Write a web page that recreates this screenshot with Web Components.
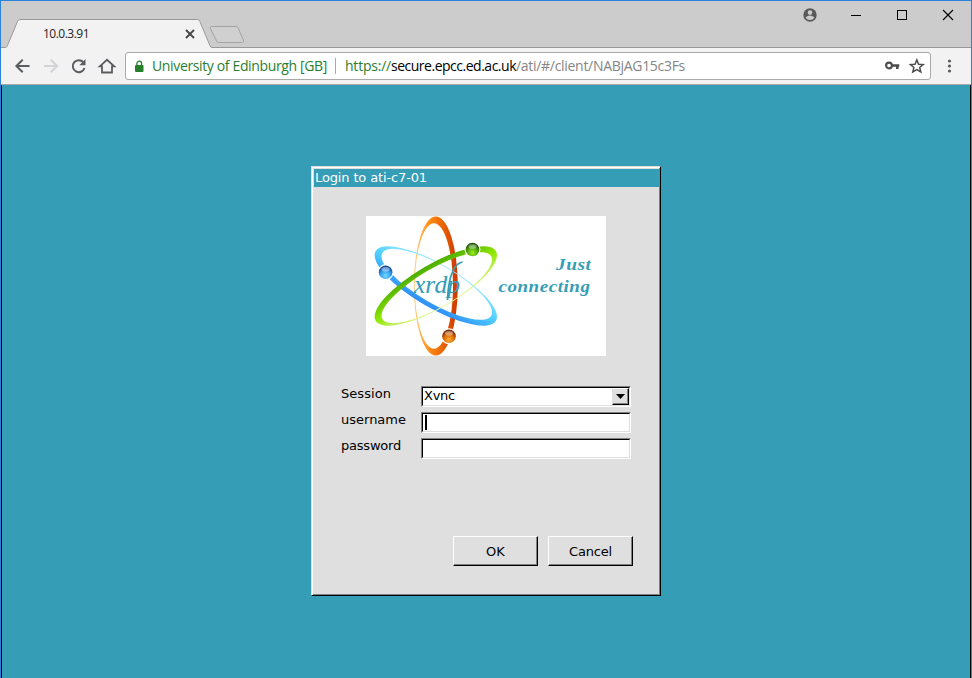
<!DOCTYPE html>
<html lang="en"><head><meta charset="utf-8"><title>10.0.3.91</title>
<style>html,body{margin:0;height:100%;overflow:hidden}</style></head><body>
<browser-window>
  <tab-strip slot="tabs"></tab-strip>
  <tool-bar slot="tools"></tool-bar>
  <login-dialog></login-dialog>
</browser-window>
<script>
const define = (name, html, setup) => customElements.define(name, class extends HTMLElement {
  constructor() { super(); this.attachShadow({mode: 'open'}).innerHTML = html; }
  connectedCallback() { if (setup) setup(this); }
});

/* Text run whose tracking is adjusted to fill the width given in "w". */
define('fit-text', `<style>:host{display:block;white-space:pre;flex:none}span{display:inline-block}</style><span><slot></slot></span>`, el => {
  const s = el.shadowRoot.querySelector('span'), w = +el.getAttribute('w');
  el.style.width = w + 'px';
  s.style.letterSpacing = (w - s.getBoundingClientRect().width) / el.textContent.length + 'px';
});

define('tab-strip', `<style>
:host{display:flex;height:46px;background:#ccc;border-bottom:1px solid #999;position:relative}
.tab{width:206px;margin-left:3px;position:relative;flex:none}
.tab svg{position:absolute;left:0;top:0;z-index:0}
.in{position:relative;display:flex;align-items:center;height:20px;padding:23px 0 0 39px;font:12px/20px "Open Sans","Noto Sans",sans-serif;color:#222}
.in .x{position:static;margin-left:96px}
.new{margin:23px 0 0 -2px;flex:none;position:relative}
.ctl{margin-left:auto;display:flex;padding:6px 16px 0 0;align-items:flex-start;flex:none}
</style>
<div class="tab"><svg width="210" height="48"><path d="M0 46.5H1.5Q2.7 46.3 3.3 44.8L13.6 20.3Q14.5 18.5 16 18.5H193.5Q195 18.5 195.8 20.3L206 44.8Q206.6 46.5 208 46.5V48H0Z" fill="#f2f2f2"/><path d="M0 46.5H1.5Q2.7 46.3 3.3 44.8L13.6 20.3Q14.5 18.5 16 18.5H193.5Q195 18.5 195.8 20.3L206 44.8Q206.6 46.5 208 46.5" fill="none" stroke="#999"/></svg>
<div class="in"><fit-text w="46">10.0.3.91</fit-text><svg class="x" width="10" height="10"><path d="M1 1l8 8M9 1L1 9" stroke="#444" stroke-width="1.8"/></svg></div></div>
<svg class="new" width="38" height="20"><path d="M3.5 2.5H28Q29.5 2.5 30.2 4L35.3 16Q36 18.5 34.5 18.5H11Q9.3 18.5 8.6 17L2.5 4.5Q2 2.5 3.5 2.5Z" fill="#d0d0d0" stroke="#a3a3a3"/></svg>
<div class="ctl"><svg width="152" height="18">
<circle cx="7" cy="8" r="6.7" fill="#5a5a5a"/><circle cx="7" cy="5.6" r="2.3" fill="#ccc"/><path d="M2.5 10.5Q4.8 8.5 7 8.5T11.5 10.5Q9.8 13 7 13T2.5 10.5Z" fill="#ccc"/>
<path d="M48 8.5H58" stroke="#000"/><rect x="94.5" y="3.5" width="9" height="9" fill="none" stroke="#000"/><path d="M140 3l10 10M150 3l-10 10" stroke="#000" stroke-width="1.1"/></svg></div>`);

define('tool-bar', `<style>
:host{display:flex;align-items:center;box-sizing:border-box;height:37px;background:#f2f2f2;border-bottom:1px solid #a9a9a9;padding:0 0 0 13px;font:14px/20px "Open Sans","Noto Sans",sans-serif}
svg{flex:none;display:block}
.box{display:flex;align-items:center;box-sizing:border-box;width:806px;height:28px;border:1px solid #a9a9a9;border-radius:3px;background:#fff;margin-left:9px;padding-left:8px;flex:none}
.org{color:#2a7e30;margin-left:8px}.sep{width:1px;height:16px;background:#aaa;margin:0 9px 0 8px}
.g{color:#2a7e30}.p{color:#858585}.b{color:#000}
.icons{margin-left:auto;margin-right:2px}
</style>
<svg width="102" height="20" fill="none" stroke="#5a5c60" stroke-width="2">
<path d="M15.5 10H2.5M8.7 3.7L2.4 10l6.3 6.3"/>
<path d="M30 10H43M36.8 3.7L43.1 10l-6.3 6.3" stroke="#d2d3d5"/>
<path d="M69.3 6.2A6 6 0 1 0 70.5 12"/><path d="M71.5 3V9.2H65.3Z" fill="#5a5c60" stroke="none"/>
<path d="M85.8 10.3L93 3.8l7.2 6.5H98V16.5H88V10.3Z" stroke-width="1.8"/></svg>
<div class="box"><svg width="10" height="13"><rect x="1" y="5" width="8.5" height="7" rx="1" fill="#25802c"/><path d="M2.9 6V3.5a2.3 2.3 0 0 1 4.7 0V6" fill="none" stroke="#25802c" stroke-width="1.3"/></svg>
<fit-text class="org" w="175">University of Edinburgh [GB]</fit-text><div class="sep"></div>
<fit-text class="g" w="46">https://</fit-text><fit-text class="b" w="125">secure.epcc.ed.ac.uk</fit-text><fit-text class="p" w="169">/ati/#/client/NABjAG15c3Fs</fit-text>
<svg class="icons" width="44" height="18"><circle cx="5" cy="8.5" r="2.9" fill="none" stroke="#4d4d4d" stroke-width="2.1"/><path d="M8 7.3H15.3V9.8H14.6V12H12V9.8H8Z" fill="#4d4d4d"/>
<path transform="translate(6.6 0)" d="M26.2 2.9L28 7.2 32.6 7.6 29.1 10.5 30.2 15 26.2 12.6 22.2 15 23.3 10.5 19.8 7.6 24.4 7.2Z" fill="none" stroke="#4d4d4d" stroke-width="1.5"/></svg></div>
<svg style="margin-left:15px" width="8" height="16" fill="#5a5c60"><circle cx="3.5" cy="3" r="1.6"/><circle cx="3.5" cy="8" r="1.6"/><circle cx="3.5" cy="13" r="1.6"/></svg>`);

define('xrdp-logo', `<style>:host{display:block;width:240px;height:140px;background:#fff}svg{display:block}</style>
<svg width="240" height="140">
<defs>
<linearGradient id="o" gradientUnits="userSpaceOnUse" x1="-22" y1="0" x2="22" y2="0"><stop offset="0" stop-color="#ffd28a"/><stop offset=".35" stop-color="#ff8c10"/><stop offset=".65" stop-color="#ea6408"/><stop offset="1" stop-color="#cc3600"/></linearGradient>
<linearGradient id="b" gradientUnits="userSpaceOnUse" x1="-22" y1="0" x2="22" y2="0"><stop offset="0" stop-color="#9ceaff"/><stop offset=".5" stop-color="#4fcfff"/><stop offset="1" stop-color="#2f8df5"/></linearGradient>
<linearGradient id="g" gradientUnits="userSpaceOnUse" x1="-22" y1="0" x2="22" y2="0"><stop offset="0" stop-color="#e2f79a"/><stop offset=".5" stop-color="#8ee800"/><stop offset="1" stop-color="#4cac00"/></linearGradient>
<radialGradient id="bo" cx=".5" cy=".75" r=".65"><stop stop-color="#ffac30"/><stop offset=".6" stop-color="#d96a08"/><stop offset="1" stop-color="#7a2a00"/></radialGradient>
<radialGradient id="bb" cx=".5" cy=".75" r=".65"><stop stop-color="#70dcff"/><stop offset=".6" stop-color="#359cec"/><stop offset="1" stop-color="#104c98"/></radialGradient>
<radialGradient id="bg" cx=".5" cy=".75" r=".65"><stop stop-color="#9cf020"/><stop offset=".6" stop-color="#50a808"/><stop offset="1" stop-color="#1c5000"/></radialGradient>
<path id="ring" fill-rule="evenodd" d="M-22 0A22 69.5 0 0 1 22 0A22 69.5 0 0 1 -22 0ZM-21 0A19 62.5 0 0 0 17.2 0A19 62.5 0 0 0 -21 0Z"/>
</defs>
<g transform="translate(69.8 70)">
<use href="#ring" fill="url(#o)"/>
<use href="#ring" fill="url(#b)" transform="rotate(120)"/>
<use href="#ring" fill="url(#g)" transform="rotate(-120)"/></g>
<g fill="#fff"><circle cx="106.5" cy="33.5" r="8"/><circle cx="19.6" cy="56.3" r="8"/><circle cx="83" cy="120.3" r="8"/></g>
<circle cx="106.5" cy="33.5" r="6.8" fill="url(#bg)"/><circle cx="19.6" cy="56.3" r="6.8" fill="url(#bb)"/><circle cx="83" cy="120.3" r="6.8" fill="url(#bo)"/>
<g fill="#fff" opacity=".4"><ellipse cx="106.5" cy="30.5" rx="4" ry="2.3"/><ellipse cx="19.6" cy="53.3" rx="4" ry="2.3"/><ellipse cx="83" cy="117.3" rx="4" ry="2.3"/></g>
<text x="48" y="77" font-family="Liberation Serif,serif" font-style="italic" font-size="26" fill="#359db5" textLength="46" lengthAdjust="spacingAndGlyphs">xrdp</text>
<path d="M81.5 84Q82 73 83.5 66Q87 48 96.5 46" fill="none" stroke="#359db5" stroke-width="1.7"/>
<g font-family="Liberation Serif,serif" font-style="italic" font-weight="bold" font-size="16.5" letter-spacing=".5" fill="#359db5"><text x="190" y="54" textLength="35.5" lengthAdjust="spacingAndGlyphs">Just</text><text x="132.5" y="76" textLength="92" lengthAdjust="spacingAndGlyphs">connecting</text></g>
</svg>`);

define('form-row', `<style>
:host{display:flex;height:21px;color:#000}
.l{width:80px;line-height:15px;flex:none}
.f{box-sizing:border-box;width:210px;height:21px;border:1px solid;border-color:#808080 #fff #fff #808080}
.i{box-sizing:border-box;height:19px;background:#fff;border:1px solid;border-color:#000 #dfdfdf #dfdfdf #000;display:flex;align-items:center;justify-content:space-between;padding-left:1px;line-height:15px}
fit-text,::slotted(*){flex:none}::slotted(fit-text:not([slot])){margin-top:-2px}</style>
<div class="l"><slot name="label"></slot></div><div class="f"><div class="i"><slot></slot></div></div>`);

define('drop-arrow', `<style>:host{display:block;box-sizing:border-box;width:17px;height:17px;background:#dfdfdf;border:1px solid;border-color:#fff #000 #000 #dfdfdf;box-shadow:inset -1px -1px #808080}svg{display:block}</style><svg width="15" height="15"><path d="M3 5H12L7.5 10Z"/></svg>`);
define('text-caret', `<style>:host{display:block;width:2px;height:15px;background:#000;margin-left:1px}</style>`);

define('push-button', `<style>:host{display:flex;align-items:center;justify-content:center;box-sizing:border-box;width:85px;height:30px;border:1px solid;border-color:#fff #000 #000 #fff;box-shadow:inset -1px -1px #808080;background:#dfdfdf;line-height:16px;padding-top:2px}</style><slot></slot>`);

define('login-dialog', `<style>
:host{display:flex;flex-direction:column;align-items:stretch;box-sizing:border-box;width:350px;height:430px;background:#dfdfdf;border:1px solid;border-color:#dfdfdf #000 #000 #dfdfdf;box-shadow:inset 1px 1px #fff,inset -1px -1px #808080;padding:2px 1px 0 2px;font:13px/15px "DejaVu Sans",sans-serif;color:#000}
header{height:18px;background:#359db5;color:#fff;padding-left:1px;line-height:18px}
xrdp-logo{margin:29px 0 0 52px}
.form{display:grid;gap:5px;margin:30px 0 0 27px}
.b{display:flex;gap:10px;margin:77px 0 0 139px}
</style>
<header><fit-text w="112">Login to ati-c7-01</fit-text></header>
<xrdp-logo></xrdp-logo>
<div class="form">
<form-row><fit-text slot="label" w="50">Session</fit-text><fit-text w="31">Xvnc</fit-text><drop-arrow></drop-arrow></form-row>
<form-row><fit-text slot="label" w="65">username</fit-text><text-caret></text-caret></form-row>
<form-row><fit-text slot="label" w="60">password</fit-text></form-row></div>
<div class="b"><push-button><fit-text w="19">OK</fit-text></push-button><push-button><fit-text w="43">Cancel</fit-text></push-button></div>`);

define('browser-window', `<style>
:host{display:flex;flex-direction:column;box-sizing:border-box;width:972px;height:678px;border:1px solid #2a82da;border-bottom:0;background:#359db5}
main{flex:1;box-sizing:border-box;border:solid #000;border-width:0 1px;background:#359db5;display:flex;justify-content:center;align-items:flex-start;padding-top:81px}
::slotted(*){flex:none}</style><slot name="tabs"></slot><slot name="tools"></slot><main><slot></slot></main>`);
</script></body></html>
